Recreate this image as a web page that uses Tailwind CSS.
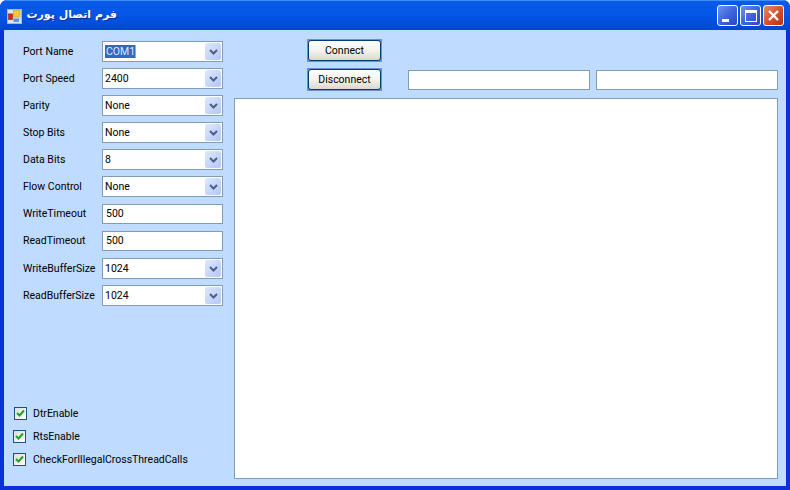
<!DOCTYPE html>
<html lang="en">
<head>
    <meta charset="UTF-8">
    <title>Port</title>
    <script src="https://cdn.jsdelivr.net/npm/@tailwindcss/browser@4"></script>
</head>
<body class="m-0 w-[790px] h-[490px] overflow-hidden bg-[#ffffff] font-['Roboto',sans-serif] text-[10.5px] text-black">
    <div class="w-[790px] h-[490px] flex flex-col rounded-t-[7px] overflow-hidden bg-[#0831d9]">
        <!-- title bar -->
        <header class="h-[30px] shrink-0 flex items-center pl-[7px] pr-[6px] bg-gradient-to-b from-[#0a5be8] via-[#0355e6] to-[#0246d0] border-t border-[#3b8cf5]">
            <svg width="15" height="15" viewBox="0 0 15 15" class="shrink-0 mt-[2px]">
                <rect x="0.5" y="0.5" width="14" height="14" fill="#dbe6f2" stroke="#b4b8a8"/>
                <path d="M1 4.5 H14 M1 10 H14" stroke="#c4cdd2" stroke-width="1"/>
                <rect x="1.5" y="5" width="4" height="5.5" fill="#d8281c" stroke="#8a1a10" stroke-width="0.6"/>
                <rect x="6.5" y="1.5" width="6.5" height="6.5" fill="#f7c83c" stroke="#c99a28" stroke-width="0.6"/>
                <rect x="6.5" y="9.5" width="5.5" height="3.5" fill="#5f93dd"/>
            </svg>
            <span dir="rtl" class="ml-[5px] w-[90px] font-['DejaVu_Sans',sans-serif] font-bold text-[11px] text-white [text-shadow:1px_1px_0_#0a2a9a] whitespace-nowrap">فرم اتصال پورت</span>
            <div class="ml-auto flex gap-[2px]">
                <div class="w-[21px] h-[21px] rounded-[3px] border border-white bg-gradient-to-br from-[#6f92ee] via-[#3f65dc] to-[#2a46c4] flex items-end pl-[4px] pb-[3px]">
                    <div class="w-[7px] h-[3px] bg-white"></div>
                </div>
                <div class="w-[21px] h-[21px] rounded-[3px] border border-white bg-gradient-to-br from-[#6f92ee] via-[#3f65dc] to-[#2a46c4] flex items-center justify-center">
                    <div class="w-[12px] h-[12px] border border-white border-t-[3px]"></div>
                </div>
                <div class="w-[21px] h-[21px] rounded-[3px] border border-white bg-gradient-to-br from-[#e9876a] via-[#d9512c] to-[#b8330f] flex items-center justify-center">
                    <svg width="13" height="13" viewBox="0 0 13 13">
                        <path d="M2 2 L11 11 M11 2 L2 11" stroke="#fff" stroke-width="2.4" fill="none"/>
                    </svg>
                </div>
            </div>
        </header>

        <!-- client area -->
        <main class="flex-1 mx-[4px] mb-[4px] bg-[#bfdbff] flex min-h-0">
            <section class="w-[230px] shrink-0 flex flex-col pt-[11px]">
                <div class="flex flex-col gap-[6px]">
                    <div class="flex items-center h-[21px]">
                        <label class="w-[98px] pl-[19px] pt-[1px] whitespace-nowrap">Port Name</label>
                        <div class="w-[121px] h-[21px] pl-[2px] pr-[1px] flex items-center bg-white border border-[#7f9db9]">
                            <span class="bg-[#316ac5] text-[#dfe8f8] w-[31px] px-[1px] h-[13px] leading-[13px] -mt-[1px] border-r border-[#d9a05a]">COM1</span>
                            <div class="ml-auto w-[16px] h-[17px] rounded-[2px] bg-gradient-to-br from-[#dfe8fd] to-[#b3c6f4] flex items-center justify-center">
                                <svg width="9" height="6" viewBox="0 0 9 6"><path d="M1 1 L4.5 4.5 L8 1" stroke="#4d6185" stroke-width="2" fill="none"/></svg>
                            </div>
                        </div>
                    </div>
                    <div class="flex items-center h-[21px]">
                        <label class="w-[98px] pl-[19px] pt-[1px] whitespace-nowrap">Port Speed</label>
                        <div class="w-[121px] h-[21px] pl-[2px] pr-[1px] flex items-center bg-white border border-[#7f9db9]">
                            <span class="pt-[1px]">2400</span>
                            <div class="ml-auto w-[16px] h-[17px] rounded-[2px] bg-gradient-to-br from-[#dfe8fd] to-[#b3c6f4] flex items-center justify-center">
                                <svg width="9" height="6" viewBox="0 0 9 6"><path d="M1 1 L4.5 4.5 L8 1" stroke="#4d6185" stroke-width="2" fill="none"/></svg>
                            </div>
                        </div>
                    </div>
                    <div class="flex items-center h-[21px]">
                        <label class="w-[98px] pl-[19px] pt-[1px] whitespace-nowrap">Parity</label>
                        <div class="w-[121px] h-[21px] pl-[2px] pr-[1px] flex items-center bg-white border border-[#7f9db9]">
                            <span class="pt-[1px]">None</span>
                            <div class="ml-auto w-[16px] h-[17px] rounded-[2px] bg-gradient-to-br from-[#dfe8fd] to-[#b3c6f4] flex items-center justify-center">
                                <svg width="9" height="6" viewBox="0 0 9 6"><path d="M1 1 L4.5 4.5 L8 1" stroke="#4d6185" stroke-width="2" fill="none"/></svg>
                            </div>
                        </div>
                    </div>
                    <div class="flex items-center h-[21px]">
                        <label class="w-[98px] pl-[19px] pt-[1px] whitespace-nowrap">Stop Bits</label>
                        <div class="w-[121px] h-[21px] pl-[2px] pr-[1px] flex items-center bg-white border border-[#7f9db9]">
                            <span class="pt-[1px]">None</span>
                            <div class="ml-auto w-[16px] h-[17px] rounded-[2px] bg-gradient-to-br from-[#dfe8fd] to-[#b3c6f4] flex items-center justify-center">
                                <svg width="9" height="6" viewBox="0 0 9 6"><path d="M1 1 L4.5 4.5 L8 1" stroke="#4d6185" stroke-width="2" fill="none"/></svg>
                            </div>
                        </div>
                    </div>
                    <div class="flex items-center h-[21px]">
                        <label class="w-[98px] pl-[19px] pt-[1px] whitespace-nowrap">Data Bits</label>
                        <div class="w-[121px] h-[21px] pl-[2px] pr-[1px] flex items-center bg-white border border-[#7f9db9]">
                            <span class="pt-[1px]">8</span>
                            <div class="ml-auto w-[16px] h-[17px] rounded-[2px] bg-gradient-to-br from-[#dfe8fd] to-[#b3c6f4] flex items-center justify-center">
                                <svg width="9" height="6" viewBox="0 0 9 6"><path d="M1 1 L4.5 4.5 L8 1" stroke="#4d6185" stroke-width="2" fill="none"/></svg>
                            </div>
                        </div>
                    </div>
                    <div class="flex items-center h-[21px]">
                        <label class="w-[98px] pl-[19px] pt-[1px] whitespace-nowrap">Flow Control</label>
                        <div class="w-[121px] h-[21px] pl-[2px] pr-[1px] flex items-center bg-white border border-[#7f9db9]">
                            <span class="pt-[1px]">None</span>
                            <div class="ml-auto w-[16px] h-[17px] rounded-[2px] bg-gradient-to-br from-[#dfe8fd] to-[#b3c6f4] flex items-center justify-center">
                                <svg width="9" height="6" viewBox="0 0 9 6"><path d="M1 1 L4.5 4.5 L8 1" stroke="#4d6185" stroke-width="2" fill="none"/></svg>
                            </div>
                        </div>
                    </div>
                    <div class="flex items-center h-[21px]">
                        <label class="w-[98px] pl-[19px] pt-[1px] whitespace-nowrap">WriteTimeout</label>
                        <div class="w-[121px] h-[20px] pl-[3px] flex items-center bg-white border border-[#7f9db9]"><span class="pt-[1px]">500</span></div>
                    </div>
                    <div class="flex items-center h-[21px]">
                        <label class="w-[98px] pl-[19px] pt-[1px] whitespace-nowrap">ReadTimeout</label>
                        <div class="w-[121px] h-[20px] pl-[3px] flex items-center bg-white border border-[#7f9db9]"><span class="pt-[1px]">500</span></div>
                    </div>
                    <div class="flex items-center h-[21px] mt-[1px]">
                        <label class="w-[98px] pl-[19px] pt-[1px] whitespace-nowrap">WriteBufferSize</label>
                        <div class="w-[121px] h-[21px] pl-[2px] pr-[1px] flex items-center bg-white border border-[#7f9db9]">
                            <span class="pt-[1px]">1024</span>
                            <div class="ml-auto w-[16px] h-[17px] rounded-[2px] bg-gradient-to-br from-[#dfe8fd] to-[#b3c6f4] flex items-center justify-center">
                                <svg width="9" height="6" viewBox="0 0 9 6"><path d="M1 1 L4.5 4.5 L8 1" stroke="#4d6185" stroke-width="2" fill="none"/></svg>
                            </div>
                        </div>
                    </div>
                    <div class="flex items-center h-[21px]">
                        <label class="w-[98px] pl-[19px] pt-[1px] whitespace-nowrap">ReadBufferSize</label>
                        <div class="w-[121px] h-[21px] pl-[2px] pr-[1px] flex items-center bg-white border border-[#7f9db9]">
                            <span class="pt-[1px]">1024</span>
                            <div class="ml-auto w-[16px] h-[17px] rounded-[2px] bg-gradient-to-br from-[#dfe8fd] to-[#b3c6f4] flex items-center justify-center">
                                <svg width="9" height="6" viewBox="0 0 9 6"><path d="M1 1 L4.5 4.5 L8 1" stroke="#4d6185" stroke-width="2" fill="none"/></svg>
                            </div>
                        </div>
                    </div>
                </div>

                <div class="mt-[101px] flex flex-col gap-[10px]">
                    <div class="flex items-center h-[13px] pl-[10px] gap-[6px]">
                        <div class="w-[13px] h-[13px] border border-[#1c5180] bg-gradient-to-br from-[#dcdcd7] to-white flex items-center justify-center">
                            <svg width="9" height="9" viewBox="0 0 9 9"><path d="M1 4 L3.5 6.5 L8 1.5" stroke="#21a121" stroke-width="2" fill="none"/></svg>
                        </div>
                        <span class="pt-[1px]">DtrEnable</span>
                    </div>
                    <div class="flex items-center h-[13px] pl-[9px] gap-[7px]">
                        <div class="w-[13px] h-[13px] border border-[#1c5180] bg-gradient-to-br from-[#dcdcd7] to-white flex items-center justify-center">
                            <svg width="9" height="9" viewBox="0 0 9 9"><path d="M1 4 L3.5 6.5 L8 1.5" stroke="#21a121" stroke-width="2" fill="none"/></svg>
                        </div>
                        <span class="pt-[1px]">RtsEnable</span>
                    </div>
                    <div class="flex items-center h-[13px] pl-[9px] gap-[7px]">
                        <div class="w-[13px] h-[13px] border border-[#1c5180] bg-gradient-to-br from-[#dcdcd7] to-white flex items-center justify-center">
                            <svg width="9" height="9" viewBox="0 0 9 9"><path d="M1 4 L3.5 6.5 L8 1.5" stroke="#21a121" stroke-width="2" fill="none"/></svg>
                        </div>
                        <span class="pt-[1px]">CheckForIllegalCrossThreadCalls</span>
                    </div>
                </div>
            </section>

            <section class="flex-1 flex flex-col pt-[9px] pr-[8px] pb-[7px]">
                <div class="pl-[73px]">
                    <div class="w-[75px] h-[23px] p-[1px] bg-[#6d8fd0]">
                        <button class="block w-full h-full pt-[1px] rounded-[3px] border border-[#003c74] bg-gradient-to-b from-white via-[#f4f3ee] to-[#dcd8ce] text-center">Connect</button>
                    </div>
                </div>
                <div class="mt-[6px] flex items-start pl-[73px]">
                    <div class="w-[75px] h-[23px] p-[1px] bg-[#6d8fd0]">
                        <button class="block w-full h-full pt-[1px] rounded-[3px] border border-[#003c74] bg-gradient-to-b from-white via-[#f4f3ee] to-[#dcd8ce] text-center">Disconnect</button>
                    </div>
                    <div class="ml-[26px] mt-[2px] w-[182px] h-[20px] bg-white border border-[#7f9db9]"></div>
                    <div class="ml-[6px] mt-[2px] w-[182px] h-[20px] bg-white border border-[#7f9db9]"></div>
                </div>
                <div class="mt-[7px] flex-1 bg-white border border-[#7f9db9]"></div>
            </section>
        </main>
    </div>
</body>
</html>
